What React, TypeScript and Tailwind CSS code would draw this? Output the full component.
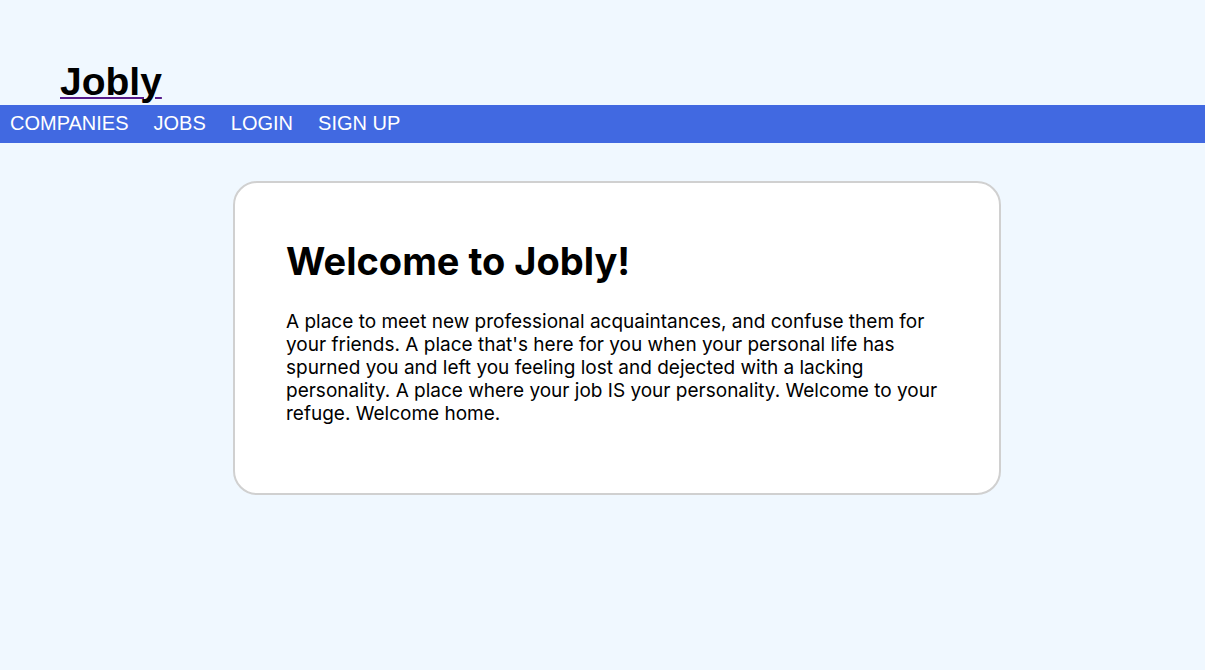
import React from "react";

const links = ["COMPANIES", "JOBS", "LOGIN", "SIGN UP"];

function NavBar() {
  return (
    <div>
      <div className="pt-[61px] pl-[60px]">
        <a
          href="#"
          className="font-['Liberation_Sans',Arial,sans-serif] text-[39px] font-bold leading-[42px] text-black underline decoration-[#551a8b] decoration-2 underline-offset-[2px]"
        >
          Jobly
        </a>
      </div>
      <nav className="mt-[2px] flex h-[38px] items-center gap-[25px] bg-[#4169e1] pl-[10px]">
        {links.map((link) => (
          <a
            key={link}
            href="#"
            className="font-['Liberation_Sans',Arial,sans-serif] text-[20px] leading-none text-white -mt-[2px]"
          >
            {link}
          </a>
        ))}
      </nav>
    </div>
  );
}

export default function App() {
  return (
    <div className="min-h-[670px] bg-[#f0f8ff] font-['Inter',sans-serif] text-black">
      <NavBar />
      {/* Home card */}
      <div className="ml-[233px] mt-[38px] h-[314px] w-[768px] rounded-[24px] border-2 border-[#d0d0d0] bg-white px-[51px] pt-[52px]">
        <h1 className="text-[38px] font-bold leading-[52px]">
          Welcome to Jobly!
        </h1>
        <p className="mt-[23px] text-[19px] leading-[23px]">
          A place to meet new professional acquaintances, and confuse them for
          your friends. A place that's here for you when your personal life
          has spurned you and left you feeling lost and dejected with a lacking
          personality. A place where your job IS your personality. Welcome to
          your refuge. Welcome home.
        </p>
      </div>
    </div>
  );
}
